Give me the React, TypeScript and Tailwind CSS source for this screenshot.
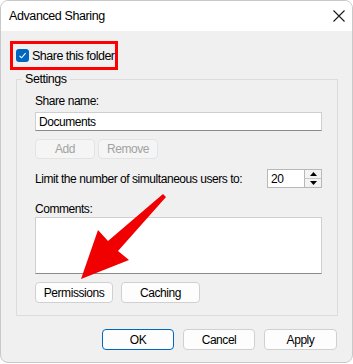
import React from 'react';

const font = { fontFamily: '"Liberation Sans", Arial, sans-serif' };

const Btn: React.FC<{ label: string; w: string; disabled?: boolean; primary?: boolean }> = ({ label, w, disabled, primary }) => (
  <div
    className={`${w} flex items-center justify-center rounded-[4px] border ${
      disabled
        ? 'h-[20px] border-[#e3e3e3] bg-[#f5f5f5] text-[#a2a2a2]'
        : primary
        ? 'h-[21px] border-[#0067c0] bg-[#fdfdfd] text-black'
        : 'h-[21px] border-[#d0d0d0] bg-[#fdfdfd] text-black'
    }`}
  >
    {label}
  </div>
);

export default function App() {
  return (
    <div
      className="relative h-[364px] w-[353px] bg-white text-[12px] leading-[14px] tracking-[-0.45px] text-black"
      style={font}
    >
      <div className="flex h-[363px] w-[353px] flex-col overflow-hidden rounded-[8px] border border-[#c9c9c9] bg-[#f0f0f0]">
        {/* Title bar */}
        <div className="flex h-[30px] shrink-0 items-center justify-between bg-white pl-[8px] pr-[7px]">
          <span className="text-[12.5px] tracking-[-0.4px]">Advanced Sharing</span>
          <svg width="12" height="12" viewBox="0 0 12 12">
            <path d="M0.5 0.5 L11.5 11.5 M11.5 0.5 L0.5 11.5" stroke="#1a1a1a" strokeWidth="1.1" />
          </svg>
        </div>

        <div className="flex flex-1 flex-col px-[9px] pt-[10px]">
          {/* Share this folder */}
          <div className="flex h-[29px] w-[108px] items-center gap-[3px] whitespace-nowrap border-[3px] border-[#ff0000] pl-[3px]">
            <div className="flex h-[13px] w-[13px] shrink-0 items-center justify-center rounded-[3px] bg-[#0067c0]">
              <svg width="9" height="9" viewBox="0 0 9 9">
                <path d="M1.5 4.8 L3.6 6.8 L7.6 2.2" fill="none" stroke="white" strokeWidth="1.1" />
              </svg>
            </div>
            <span className="text-[12.5px] tracking-[-0.5px]">Share this folder</span>
          </div>

          {/* Settings group */}
          <fieldset className="ml-[6px] mt-[2px] w-[322px] border border-[#dcdcdc] p-0">
            <legend className="ml-[5px] px-[3px] text-[12.5px] leading-[14px]">Settings</legend>
            <div className="flex flex-col pb-[12px] pl-[18px] pr-[15px]">
              <div className="mt-[8px]">Share name:</div>
              <div className="mt-[4px] flex h-[19px] items-center border border-[#cfcfcf] border-b-[#8a8a8a] bg-white pl-[3px]">
                Documents
              </div>
              <div className="mt-[8px] flex gap-[3px]">
                <Btn label="Add" w="w-[60px]" disabled />
                <Btn label="Remove" w="w-[60px]" disabled />
              </div>
              <div className="mt-[10px] flex items-center justify-between">
                <span className="whitespace-nowrap">Limit the number of simultaneous users to:</span>
                <div className="flex h-[19px] border border-[#b8b8b8] bg-white">
                  <div className="flex w-[36px] items-center pl-[3px]">20</div>
                  <div className="flex w-[17px] flex-col border-l border-[#b8b8b8] bg-[#f3f3f3]">
                    <div className="flex flex-1 items-center justify-center border-b border-[#c8c8c8]">
                      <svg width="7" height="4" viewBox="0 0 7 4"><path d="M3.5 0 L7 4 L0 4 Z" fill="#000" /></svg>
                    </div>
                    <div className="flex flex-1 items-center justify-center">
                      <svg width="7" height="4" viewBox="0 0 7 4"><path d="M0 0 L7 0 L3.5 4 Z" fill="#000" /></svg>
                    </div>
                  </div>
                </div>
              </div>
              <div className="mt-[14px]">Comments:</div>
              <div className="mt-[1px] h-[57px] border border-[#cfcfcf] border-b-[#8a8a8a] bg-white" />
              <div className="mt-[8px] flex gap-[8px]">
                <Btn label="Permissions" w="w-[78px]" />
                <Btn label="Caching" w="w-[79px]" />
              </div>
            </div>
          </fieldset>

          {/* Dialog buttons */}
          <div className="mt-[13px] flex justify-end gap-[9px] pr-[6px]">
            <Btn label="OK" w="w-[72px]" primary />
            <Btn label="Cancel" w="w-[72px]" />
            <Btn label="Apply" w="w-[73px]" />
          </div>
        </div>
      </div>

      {/* Red annotation arrow */}
      <svg className="pointer-events-none absolute left-0 top-0" width="353" height="364" viewBox="0 0 353 364">
        <defs>
          <filter id="soft" x="-10%" y="-10%" width="120%" height="120%">
            <feGaussianBlur stdDeviation="0.6" />
          </filter>
        </defs>
        <polygon
          points="163,194 166,197 118,251 129,260 81,279 98,230 108,241"
          fill="#f00000"
          filter="url(#soft)"
        />
      </svg>
    </div>
  );
}
